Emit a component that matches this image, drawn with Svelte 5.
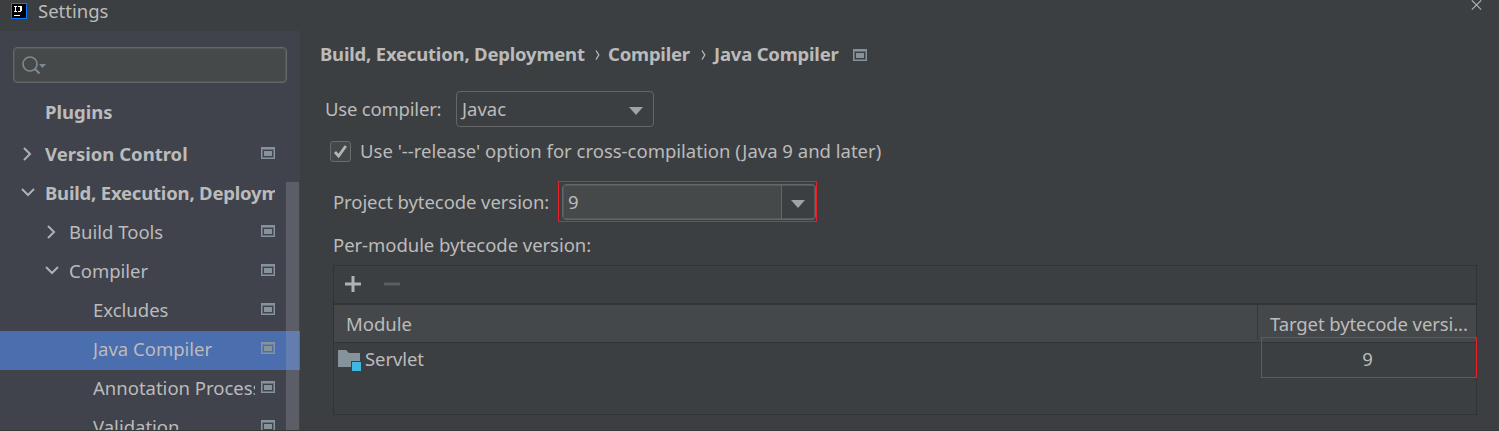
<script>
  const tree = [
    { label: 'Plugins', level: 0, bold: true, kind: 'plugins' },
    { label: 'Version Control', level: 0, bold: true, arrow: 'right', icon: true },
    { label: 'Build, Execution, Deployment', level: 0, bold: true, arrow: 'down', kind: 'tight' },
    { label: 'Build Tools', level: 1, arrow: 'right', icon: true },
    { label: 'Compiler', level: 1, arrow: 'down', icon: true },
    { label: 'Excludes', level: 2, icon: true },
    { label: 'Java Compiler', level: 2, icon: true, selected: true },
    { label: 'Annotation Processors', level: 2, icon: true },
    { label: 'Validation', level: 2, icon: true }
  ];
</script>

{#snippet projectIcon()}
  <svg class="project-icon" width="14" height="12" viewBox="0 0 14 12" shape-rendering="crispEdges">
    <path fill="#87939a" fill-rule="evenodd" d="M0 0H14V12H0ZM1 2V11H13V2Z" />
    <path fill="#87939a" d="M3 4H11V9H3Z" />
    <path fill="none" stroke="#87939a" stroke-opacity=".55" d="M1.5 2.5H12.5V10.5H1.5Z" />
  </svg>
{/snippet}

{#snippet triangle()}
  <svg width="14" height="8" viewBox="0 0 14 8"><path fill="#a0a3a5" d="M0 0H14L7 8Z" /></svg>
{/snippet}

<div class="window">
  <header class="titlebar">
    <svg class="logo" width="16" height="16" viewBox="0 0 16 16" shape-rendering="crispEdges">
      <rect width="16" height="16" fill="#087cfa" />
      <rect x="1" y="1" width="14" height="14" fill="#000" />
      <path fill="#fff" d="M3 3H6V4H5V8H6V9H3V8H4V4H3ZM7 3H11V8H10V9H7V8H9V4H7ZM3 12H9V13H3Z" />
    </svg>
    <span class="title">Settings</span>
    <svg class="close" width="11" height="11" viewBox="0 0 11 11"><path d="M.8 .3L10.2 9.7M10.2 .3L.8 9.7" stroke="#b0b2b3" stroke-width="1.1" /></svg>
  </header>

  <div class="body">
    <aside>
      <div class="search">
        <svg width="26" height="20" viewBox="0 0 26 20">
          <circle cx="8" cy="8" r="7" fill="none" stroke="#7f8b91" stroke-width="1.6" />
          <path d="M12.5 12.5L17.5 17.5" stroke="#7f8b91" stroke-width="2.2" />
          <path d="M17 8H24L20.5 12Z" fill="#7f8b91" />
        </svg>
      </div>
      <div class="tree">
        {#each tree as item}
          <div class="row level{item.level} {item.kind ?? ''}" class:bold={item.bold} class:selected={item.selected}>
            <span class="arrow">
              {#if item.arrow === 'right'}
                <svg width="14" height="14" viewBox="0 0 14 14"><path d="M3 1L9 7L3 13" /></svg>
              {:else if item.arrow === 'down'}
                <svg width="14" height="14" viewBox="0 0 14 14"><path d="M1 3L7 9L13 3" /></svg>
              {/if}
            </span>
            <span class="label">{item.label}</span>
            {#if item.icon}{@render projectIcon()}{/if}
          </div>
        {/each}
      </div>
      <div class="scrollbar"></div>
    </aside>

    <main>
      <nav>
        <span class="crumb c1">Build, Execution, Deployment</span>
        <svg class="sep" width="6" height="12" viewBox="0 0 6 12"><path d="M1 1.5L3.8 6L1 10.5" /></svg>
        <span class="crumb c2">Compiler</span>
        <svg class="sep" width="6" height="12" viewBox="0 0 6 12"><path d="M1 1.5L3.8 6L1 10.5" /></svg>
        <span class="crumb c3">Java Compiler</span>
        {@render projectIcon()}
      </nav>

      <div class="compiler">
        <span class="t-use">Use compiler:</span>
        <div class="select"><span>Javac</span>{@render triangle()}</div>
      </div>

      <div class="release">
        <span class="checkbox">
          <svg width="15" height="15" viewBox="0 0 15 15"><path d="M2 8L5.6 12L12.8 2" fill="none" stroke="#b4b6b7" stroke-width="2.8" /></svg>
        </span>
        <span class="t-release">Use '--release' option for cross-compilation (Java 9 and later)</span>
      </div>

      <div class="project">
        <span class="t-project">Project bytecode version:</span>
        <div class="marked">
          <div class="combo">
            <span class="value">9</span>
            <span class="drop">{@render triangle()}</span>
          </div>
        </div>
      </div>

      <div class="permodule">Per-module bytecode version:</div>

      <div class="table">
        <div class="toolbar">
          <svg width="16" height="16" viewBox="0 0 16 16"><path d="M0 8H16M8 0V16" stroke="#afb1b3" stroke-width="3" /></svg>
          <svg width="16" height="16" viewBox="0 0 16 16"><path d="M0 8H16" stroke="#5b5d5f" stroke-width="3" /></svg>
        </div>
        <div class="thead">
          <span class="module">Module</span>
          <span class="target">Target bytecode versi...</span>
        </div>
        <div class="trow">
          <svg width="24" height="22" viewBox="0 0 24 22">
            <path fill="#87939a" d="M0 0H8L11 3H22V11H13V17H0Z" />
            <rect x="14" y="12" width="9" height="9" fill="#40b6e0" />
          </svg>
          <span class="servlet">Servlet</span>
          <div class="cell">9</div>
        </div>
      </div>
    </main>
  </div>
</div>

<style>
  :global(body) { background: #3c3f41; }
  .window {
    width: 1499px; height: 431px; box-sizing: border-box; overflow: hidden;
    display: flex; flex-direction: column;
    background: #3c3f41; color: #bbbbbb;
    border-bottom: 1px solid #393738;
    font: 18.5px/24px "Noto Sans", "Open Sans", sans-serif;
    white-space: nowrap;
  }
  svg { display: block; flex: none; }
  .titlebar { height: 31px; flex: none; display: flex; align-items: flex-start; }
  .logo { margin: 3px 0 0 11px; }
  .title { margin: -1px 0 0 11px; }
  .close { margin: 0 17px 0 auto; }
  .body { flex: 1; min-height: 0; display: flex; }

  aside { position: relative; width: 300px; flex: none; background: #40434c; overflow: hidden; }
  .search {
    box-sizing: border-box; width: 274px; height: 36px; margin: 16px 0 0 13px; padding: 8px 0 0 8px;
    background: #45494a; border: 1px solid #65686a; border-radius: 4px;
    box-shadow: inset 0 0 0 1px #535657;
  }
  .tree { padding-top: 14px; }
  .row { height: 39px; display: flex; align-items: center; box-sizing: border-box; padding: 0 25px 0 21px; }
  .level1 { padding-left: 45px; }
  .level2 { padding-left: 69px; }
  .plugins { padding-bottom: 6px; }
  .selected { background: #4b6eaf; }
  .arrow { width: 14px; margin: -3px 10px 0 0; flex: none; }
  .arrow path { fill: none; stroke: #adb0b4; stroke-width: 2; }
  .label { flex: 1; min-width: 0; overflow: hidden; margin-top: -4px; }
  .tight .label { letter-spacing: -.2px; }
  .row .project-icon { margin: -5px 0 0 6px; }
  .bold, .crumb { font-weight: 700; }
  .scrollbar { position: absolute; left: 286px; top: 151px; width: 13px; bottom: 0; background: rgba(166, 166, 176, .28); }

  main { flex: 1; min-width: 0; display: flex; flex-direction: column; align-items: flex-start; }
  nav { display: flex; align-items: center; height: 24px; margin: 11px 0 0 20px; letter-spacing: -.2px; }
  .c1 { width: 264px; }
  .c2 { width: 82px; }
  .c3 { width: 125px; }
  .sep { margin: 1px 7px 0 11px; }
  .sep path { fill: none; stroke: #bbbbbb; stroke-width: 1.3; }
  nav .project-icon { margin: 1px 0 0 14px; }
  .compiler { display: flex; align-items: center; height: 36px; margin: 25px 0 0 25px; }
  .t-use { width: 131px; letter-spacing: -.2px; }
  .select {
    box-sizing: border-box; width: 198px; height: 36px; padding: 0 10px 0 5px;
    display: flex; align-items: center; justify-content: space-between;
    border: 1px solid #646668; border-radius: 4px;
  }
  .select svg { margin-top: 3px; }
  .release { display: flex; align-items: center; height: 22px; margin: 13px 0 0 30px; gap: 9px; }
  .checkbox {
    box-sizing: border-box; width: 21px; height: 21px; display: grid; place-items: center;
    background: #43494a; border: 1px solid #6b6b6b; border-radius: 3px;
  }
  .project { display: flex; align-items: center; height: 41px; margin: 19px 0 0 33px; }
  .t-project { width: 225px; letter-spacing: -.08px; }
  .marked { box-sizing: border-box; width: 259px; height: 41px; border: 1px solid #ee1c24; padding: 2px 0 0 3px; }
  .combo {
    box-sizing: border-box; width: 254px; height: 36px; display: flex; overflow: hidden;
    border: 1px solid #646668; border-radius: 4px; box-shadow: inset 0 0 0 1px #56595b;
  }
  .value { flex: 1; background: #45494a; padding: 5px 0 0 5px; box-shadow: inset 1px 1px #56595b, inset 0 -1px #56595b; }
  .drop { width: 34px; border-left: 1px solid #646668; display: grid; place-items: center; padding: 3px 1px 0 0; box-sizing: border-box; }
  .permodule { margin: 11px 0 0 33px; letter-spacing: -.05px; }
  .table { box-sizing: border-box; width: 1144px; height: 150px; margin: 8px 0 0 33px; border: 1px solid #313334; }
  .toolbar { box-sizing: border-box; height: 39px; display: flex; gap: 23px; padding: 10px 0 0 11px; border-bottom: 2px solid #323435; }
  .thead { box-sizing: border-box; height: 38px; display: flex; background: #45484a; border-bottom: 1px solid #323435; }
  .module { flex: 1; padding: 7px 0 0 12px; border-right: 1px solid #35383a; margin-bottom: 2px; }
  .target { width: 218px; box-sizing: border-box; padding: 7px 0 0 12px; letter-spacing: -.1px; }
  .trow { display: flex; padding: 7px 0 0 4px; }
  .servlet { margin: -3px 0 0 3px; letter-spacing: -.1px; }
  .cell {
    box-sizing: border-box; width: 216px; height: 41px; margin: -13px -1px 0 auto; padding: 9px 3px 0 0;
    text-align: center; border: 1px solid #ee1c24;
  }
</style>
